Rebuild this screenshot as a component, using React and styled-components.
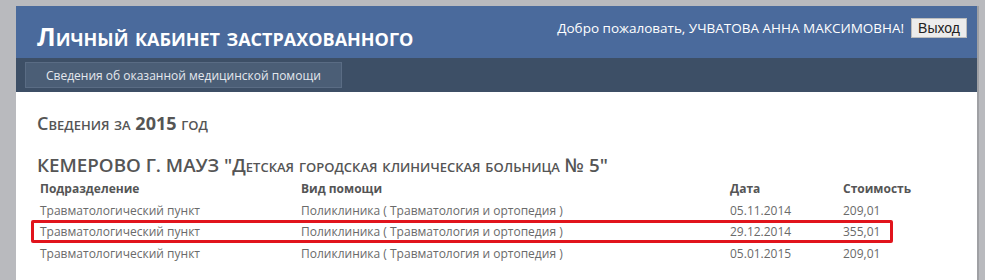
import React from 'react'
import styled, { createGlobalStyle } from 'styled-components'

const GlobalStyle = createGlobalStyle`
  body {
    margin: 0;
    background: #b9babe;
    font-family: "Open Sans", "Noto Sans", Arial, sans-serif;
  }
`

const rows = [
  { unit: 'Травматологический пункт', kind: 'Поликлиника ( Травматология и ортопедия )', date: '05.11.2014', cost: '209,01' },
  { unit: 'Травматологический пункт', kind: 'Поликлиника ( Травматология и ортопедия )', date: '29.12.2014', cost: '355,01', marked: true },
  { unit: 'Травматологический пункт', kind: 'Поликлиника ( Травматология и ортопедия )', date: '05.01.2015', cost: '209,01' },
]

function App() {
  return (
    <>
      <GlobalStyle />
      <Page>
        <Panel>
          <Header>
            <Title>Личный кабинет застрахованного</Title>
            <UserBox>
              <Welcome>Добро пожаловать, УЧВАТОВА АННА МАКСИМОВНА!</Welcome>
              <ExitButton>Выход</ExitButton>
            </UserBox>
          </Header>
          <Nav>
            <NavItem>Сведения об оказанной медицинской помощи</NavItem>
          </Nav>
          <Content>
            <Heading>Сведения за <b>2015</b> год</Heading>
            <OrgName>КЕМЕРОВО Г. МАУЗ "Детская городская клиническая больница № 5"</OrgName>
            <Table>
              <Row head>
                <span>Подразделение</span>
                <span>Вид помощи</span>
                <span>Дата</span>
                <span>Стоимость</span>
              </Row>
              {rows.map((r, i) => (
                <Row key={i} marked={r.marked}>
                  <span>{r.unit}</span>
                  <span>{r.kind}</span>
                  <span>{r.date}</span>
                  <span>{r.cost}</span>
                </Row>
              ))}
            </Table>
          </Content>
        </Panel>
      </Page>
    </>
  )
}

export default App

const Page = styled.div`
  padding: 6px 6px 0 16px;
  min-height: 280px;
  box-sizing: border-box;
`

const Panel = styled.div`
  background: #fff;
  border-right: 2px solid #9fa0a4;
  min-height: 274px;
`

const Header = styled.div`
  height: 52px;
  background: #4a6a9c;
  display: flex;
  justify-content: space-between;
  align-items: flex-start;
  padding: 0 10px 0 21px;
`

const Title = styled.h1`
  margin: 13px 0 0;
  font-size: 25px;
  font-weight: 700;
  font-variant: small-caps;
  color: #fff;
`

const UserBox = styled.div`
  display: flex;
  align-items: center;
  gap: 7px;
  margin-top: 12px;
`

const Welcome = styled.span`
  color: #fff;
  font-size: 13.5px;
`

const ExitButton = styled.button`
  font-family: Arial, "Liberation Sans", sans-serif;
  font-size: 14px;
  color: #222;
  background: #ececec;
  border: 1px solid #bdbdbd;
  padding: 1px 6px;
  height: 20px;
  line-height: 16px;
`

const Nav = styled.div`
  height: 34px;
  background: #3d4f66;
  padding: 4px 9px;
  box-sizing: border-box;
  display: flex;
`

const NavItem = styled.div`
  background: #4b5e76;
  border: 1px solid #5a6c84;
  color: #e4e8ee;
  font-size: 12px;
  padding: 0 20px;
  display: flex;
  align-items: center;
`

const Content = styled.div`
  padding: 19px 21px 0;
  color: #555;
`

const Heading = styled.div`
  font-size: 18px;
  font-variant: small-caps;
  font-weight: 600;
  b { font-weight: 700; }
`

const OrgName = styled.div`
  margin-top: 17px;
  font-size: 18.8px;
  font-variant: small-caps;
  font-weight: 600;
`

const Table = styled.div`
  padding-left: 3px;
  margin-top: 0;
`

const Row = styled.div`
  position: relative;
  display: grid;
  grid-template-columns: 261px 429px 113px 1fr;
  height: 21.5px;
  align-items: center;
  font-size: 12px;
  color: ${p => (p.head ? '#555' : '#6a6a6a')};
  font-weight: ${p => (p.head ? 700 : 400)};

  &::after {
    content: '';
    display: ${p => (p.marked ? 'block' : 'none')};
    position: absolute;
    left: -9px;
    top: -1px;
    width: 862px;
    height: 23px;
    border: 3px solid #e1141c;
    border-radius: 2px;
    box-sizing: border-box;
  }
`
